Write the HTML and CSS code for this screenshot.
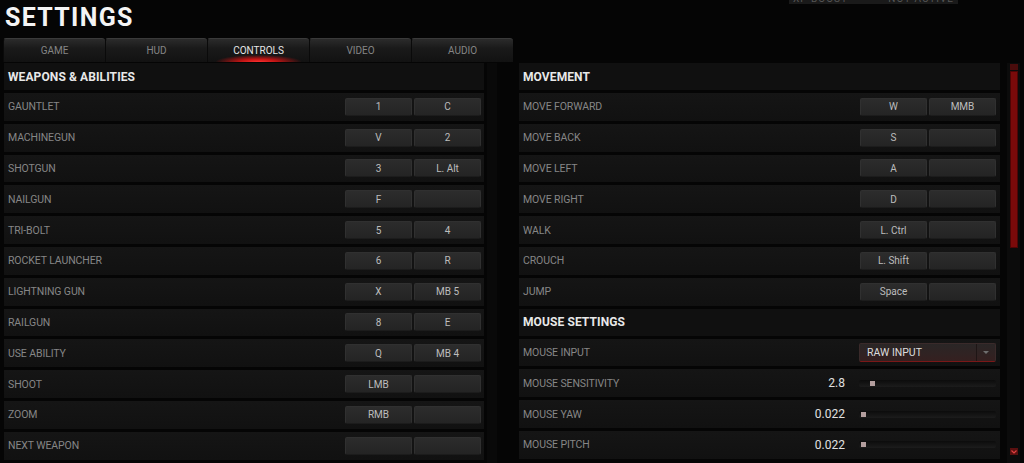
FILE: index.html
```html
<!DOCTYPE html>
<html lang="en">
<head>
    <meta charset="UTF-8">
    <meta name="viewport" content="width=device-width, initial-scale=1.0">
    <title>Settings</title>
    <link rel="stylesheet" href="styles.css">
</head>
<body>
    <div class="xp-boost"><span>XP BOOST</span><span>NOT ACTIVE</span></div>

    <header class="top">
        <h1 class="title">SETTINGS</h1>
    </header>

    <nav class="tabs">
        <div class="tab">GAME</div>
        <div class="tab">HUD</div>
        <div class="tab active">CONTROLS</div>
        <div class="tab">VIDEO</div>
        <div class="tab">AUDIO</div>
    </nav>

    <main class="content">
        <section class="col col-left">
            <div class="section-head">WEAPONS &amp; ABILITIES</div>
            <div class="row"><span class="label">GAUNTLET</span><div class="keys"><span class="key">1</span><span class="key">C</span></div></div>
            <div class="row"><span class="label">MACHINEGUN</span><div class="keys"><span class="key">V</span><span class="key">2</span></div></div>
            <div class="row"><span class="label">SHOTGUN</span><div class="keys"><span class="key">3</span><span class="key">L. Alt</span></div></div>
            <div class="row"><span class="label">NAILGUN</span><div class="keys"><span class="key">F</span><span class="key"></span></div></div>
            <div class="row"><span class="label">TRI-BOLT</span><div class="keys"><span class="key">5</span><span class="key">4</span></div></div>
            <div class="row"><span class="label">ROCKET LAUNCHER</span><div class="keys"><span class="key">6</span><span class="key">R</span></div></div>
            <div class="row"><span class="label">LIGHTNING GUN</span><div class="keys"><span class="key">X</span><span class="key">MB 5</span></div></div>
            <div class="row"><span class="label">RAILGUN</span><div class="keys"><span class="key">8</span><span class="key">E</span></div></div>
            <div class="row"><span class="label">USE ABILITY</span><div class="keys"><span class="key">Q</span><span class="key">MB 4</span></div></div>
            <div class="row"><span class="label">SHOOT</span><div class="keys"><span class="key">LMB</span><span class="key"></span></div></div>
            <div class="row"><span class="label">ZOOM</span><div class="keys"><span class="key">RMB</span><span class="key"></span></div></div>
            <div class="row"><span class="label">NEXT WEAPON</span><div class="keys"><span class="key"></span><span class="key"></span></div></div>
        </section>

        <div class="gutter"></div>

        <section class="col col-right">
            <div class="section-head">MOVEMENT</div>
            <div class="row"><span class="label">MOVE FORWARD</span><div class="keys"><span class="key">W</span><span class="key">MMB</span></div></div>
            <div class="row"><span class="label">MOVE BACK</span><div class="keys"><span class="key">S</span><span class="key"></span></div></div>
            <div class="row"><span class="label">MOVE LEFT</span><div class="keys"><span class="key">A</span><span class="key"></span></div></div>
            <div class="row"><span class="label">MOVE RIGHT</span><div class="keys"><span class="key">D</span><span class="key"></span></div></div>
            <div class="row"><span class="label">WALK</span><div class="keys"><span class="key">L. Ctrl</span><span class="key"></span></div></div>
            <div class="row"><span class="label">CROUCH</span><div class="keys"><span class="key">L. Shift</span><span class="key"></span></div></div>
            <div class="row"><span class="label">JUMP</span><div class="keys"><span class="key">Space</span><span class="key"></span></div></div>

            <div class="section-head">MOUSE SETTINGS</div>
            <div class="row">
                <span class="label">MOUSE INPUT</span>
                <div class="select">
                    <span class="select-text">RAW INPUT</span>
                    <span class="select-arrow"></span>
                </div>
            </div>
            <div class="row">
                <span class="label">MOUSE SENSITIVITY</span>
                <span class="value">2.8</span>
                <div class="slider"><span class="thumb" style="margin-left: 11px"></span></div>
            </div>
            <div class="row">
                <span class="label">MOUSE YAW</span>
                <span class="value">0.022</span>
                <div class="slider"><span class="thumb" style="margin-left: 2px"></span></div>
            </div>
            <div class="row">
                <span class="label">MOUSE PITCH</span>
                <span class="value">0.022</span>
                <div class="slider"><span class="thumb" style="margin-left: 2px"></span></div>
            </div>
        </section>

        <div class="scrollbar">
            <span class="scroll-btn"></span>
            <span class="scroll-thumb"></span>
            <span class="scroll-fill"></span>
            <span class="scroll-btn down">
                <svg width="6" height="4" viewBox="0 0 6 4"><path d="M0.5 0.5 L3 3 L5.5 0.5" fill="none" stroke="#e04040" stroke-width="1.2"/></svg>
            </span>
        </div>
    </main>
</body>
</html>
```

FILE: styles.css
```css
body {
    margin: 0;
    padding: 0;
    background-color: #050505;
    font-family: 'Roboto', 'Liberation Sans', sans-serif;
    color: #8c8c8c;
    height: 463px;
    overflow: hidden;
    position: relative;
}

.xp-boost {
    position: absolute;
    top: -9px;
    left: 789px;
    width: 161px;
    height: 13px;
    padding: 0 4px;
    background: #1a1a1a;
    display: flex;
    justify-content: space-between;
    align-items: flex-end;
    font-size: 10px;
    color: #555;
    letter-spacing: 1px;
}

.top {
    height: 38px;
    padding-left: 5px;
}

.title {
    margin: 0;
    padding-top: 3px;
    font-size: 25px;
    font-weight: 700;
    letter-spacing: 1.3px;
    color: #f4f4f4;
    line-height: 30px;
}

.tabs {
    display: flex;
    margin-left: 3px;
    width: 510px;
    height: 24px;
}

.tab {
    flex: 1;
    position: relative;
    display: flex;
    align-items: center;
    justify-content: center;
    font-size: 10px;
    color: #858585;
    background: linear-gradient(#2b2b2b, #1a1a1a 40%, #121212);
    border-top: 1px solid #3a3a3a;
    border-left: 1px solid #0a0a0a;
    border-radius: 3px 3px 0 0;
    box-sizing: border-box;
}

.tab.active {
    color: #e6e6e6;
}

.tab.active::after {
    content: "";
    position: absolute;
    left: 8px;
    right: 8px;
    bottom: 0;
    height: 7px;
    background: radial-gradient(ellipse at 50% 100%, #ff3030 0%, #c01414 30%, rgba(120, 0, 0, 0) 72%);
}

.content {
    display: flex;
    padding: 1px 0 0 4px;
}

.col {
    display: flex;
    flex-direction: column;
    gap: 3px;
}

.col-left {
    width: 480px;
}

.gutter {
    width: 10px;
    margin: 0 22px 0 3px;
    background: #090909;
}

.col-right {
    width: 481px;
}

.section-head {
    height: 27px;
    display: flex;
    align-items: center;
    padding-left: 4px;
    background: #101010;
    color: #e8e8e8;
    font-size: 12px;
    font-weight: 700;
    letter-spacing: 0.1px;
}

.row {
    height: 27.8px;
    display: flex;
    align-items: center;
    padding: 0 4px;
    background: linear-gradient(#151515, #111111);
}

.col-left .row {
    padding-right: 3px;
}

.label {
    flex: 1;
    font-size: 10.5px;
    color: #868686;
    letter-spacing: -0.1px;
}

.keys {
    display: flex;
    gap: 2px;
}

.key {
    width: 67px;
    height: 18px;
    box-sizing: border-box;
    display: flex;
    align-items: center;
    justify-content: center;
    background: linear-gradient(#2c2c2c, #242424);
    border: 1px solid #303030;
    border-bottom-color: #1c1c1c;
    border-radius: 2px;
    font-size: 10px;
    color: #bdbdbd;
}

.select {
    width: 137px;
    height: 19px;
    box-sizing: border-box;
    display: flex;
    align-items: center;
    background: linear-gradient(#2a2626, #352020);
    border: 1px solid #3a2a2a;
    border-bottom-color: #7a1818;
    border-radius: 2px;
}

.select-text {
    flex: 1;
    padding-left: 7px;
    font-size: 10.5px;
    color: #dcdcdc;
}

.select-arrow {
    width: 18px;
    height: 17px;
    border-left: 1px solid #1e1515;
    display: flex;
    align-items: center;
    justify-content: center;
}

.select-arrow::before {
    content: "";
    border-left: 3px solid transparent;
    border-right: 3px solid transparent;
    border-top: 3px solid #6e6e6e;
}

.value {
    font-size: 12px;
    color: #e0e0e0;
    margin-right: 14px;
}

.slider {
    width: 137px;
    height: 7px;
    box-sizing: border-box;
    display: flex;
    align-items: center;
    background: linear-gradient(#0c0c0c, #1c1c1c);
    border-radius: 2px;
}

.thumb {
    width: 5px;
    height: 5px;
    background: #b39e9e;
}

.scrollbar {
    width: 13px;
    margin-left: 7px;
    height: 400px;
    background: #0b0b0b;
    display: flex;
    flex-direction: column;
    align-items: center;
}

.scroll-btn {
    width: 8px;
    height: 6px;
    margin-top: 1px;
    background: #4a0c0c;
    display: flex;
    align-items: center;
    justify-content: center;
}

.scroll-btn.down {
    height: 7px;
    margin: 0 0 8px;
    background: #5a1010;
}

.scroll-thumb {
    width: 8px;
    height: 177px;
    margin-top: 1px;
    box-sizing: border-box;
    background: #7a0a0a;
    border: 1px solid #4e0505;
}

.scroll-fill {
    flex: 1;
}
```
